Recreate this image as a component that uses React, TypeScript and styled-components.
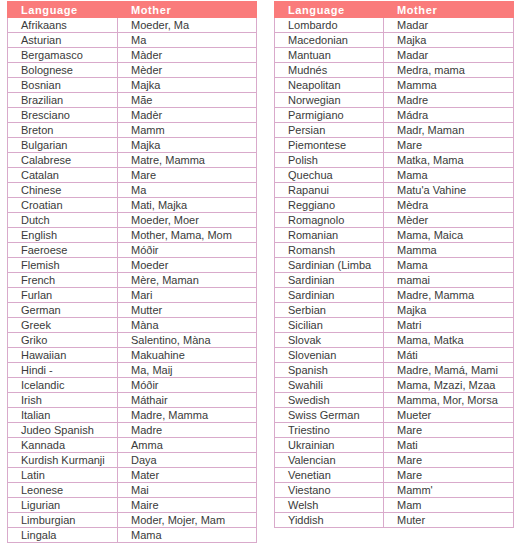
import React from 'react';
import styled, { createGlobalStyle } from 'styled-components';

const GlobalStyle = createGlobalStyle`
  html, body {
    margin: 0;
    padding: 0;
    background: #ffffff;
  }
  body {
    font-family: 'Liberation Sans', Arial, sans-serif;
  }
`;

const Page = styled.div`
  display: flex;
  align-items: flex-start;
  gap: 17px;
  padding: 1px 0 0 7px;
`;

const Table = styled.table<{ $width: number; $first: number }>`
  width: ${(p) => p.$width}px;
  border-collapse: collapse;
  table-layout: fixed;
  font-size: 11px;
  color: #3a3a3a;

  col:first-child {
    width: ${(p) => p.$first}px;
  }
`;

const HeadCell = styled.th`
  height: 15px;
  padding: 0 0 0 13px;
  background: #fa7b7b;
  color: #ffffff;
  font-weight: bold;
  letter-spacing: 0.6px;
  text-align: left;
  line-height: 14px;
  border: 1px solid #fa7b7b;
`;

const Cell = styled.td`
  height: 14px;
  padding: 0 0 0 13px;
  line-height: 14px;
  border: 1px solid #d9aacb;
  white-space: nowrap;
  overflow: hidden;
`;

const left: [string, string][] = [
  ['Afrikaans', 'Moeder, Ma'],
  ['Asturian', 'Ma'],
  ['Bergamasco', 'Màder'],
  ['Bolognese', 'Mèder'],
  ['Bosnian', 'Majka'],
  ['Brazilian', 'Mãe'],
  ['Bresciano', 'Madèr'],
  ['Breton', 'Mamm'],
  ['Bulgarian', 'Majka'],
  ['Calabrese', 'Matre, Mamma'],
  ['Catalan', 'Mare'],
  ['Chinese', 'Ma'],
  ['Croatian', 'Mati, Majka'],
  ['Dutch', 'Moeder, Moer'],
  ['English', 'Mother, Mama, Mom'],
  ['Faeroese', 'Móðir'],
  ['Flemish', 'Moeder'],
  ['French', 'Mère, Maman'],
  ['Furlan', 'Mari'],
  ['German', 'Mutter'],
  ['Greek', 'Màna'],
  ['Griko', 'Salentino, Màna'],
  ['Hawaiian', 'Makuahine'],
  ['Hindi -', 'Ma, Maij'],
  ['Icelandic', 'Móðir'],
  ['Irish', 'Máthair'],
  ['Italian', 'Madre, Mamma'],
  ['Judeo Spanish', 'Madre'],
  ['Kannada', 'Amma'],
  ['Kurdish Kurmanji', 'Daya'],
  ['Latin', 'Mater'],
  ['Leonese', 'Mai'],
  ['Ligurian', 'Maire'],
  ['Limburgian', 'Moder, Mojer, Mam'],
  ['Lingala', 'Mama'],
];

const right: [string, string][] = [
  ['Lombardo', 'Madar'],
  ['Macedonian', 'Majka'],
  ['Mantuan', 'Madar'],
  ['Mudnés', 'Medra, mama'],
  ['Neapolitan', 'Mamma'],
  ['Norwegian', 'Madre'],
  ['Parmigiano', 'Mádra'],
  ['Persian', 'Madr, Maman'],
  ['Piemontese', 'Mare'],
  ['Polish', 'Matka, Mama'],
  ['Quechua', 'Mama'],
  ['Rapanui', "Matu'a Vahine"],
  ['Reggiano', 'Mèdra'],
  ['Romagnolo', 'Mèder'],
  ['Romanian', 'Mama, Maica'],
  ['Romansh', 'Mamma'],
  ['Sardinian (Limba', 'Mama'],
  ['Sardinian', 'mamai'],
  ['Sardinian', 'Madre, Mamma'],
  ['Serbian', 'Majka'],
  ['Sicilian', 'Matri'],
  ['Slovak', 'Mama, Matka'],
  ['Slovenian', 'Máti'],
  ['Spanish', 'Madre, Mamá, Mami'],
  ['Swahili', 'Mama, Mzazi, Mzaa'],
  ['Swedish', 'Mamma, Mor, Morsa'],
  ['Swiss German', 'Mueter'],
  ['Triestino', 'Mare'],
  ['Ukrainian', 'Mati'],
  ['Valencian', 'Mare'],
  ['Venetian', 'Mare'],
  ['Viestano', "Mamm'"],
  ['Welsh', 'Mam'],
  ['Yiddish', 'Muter'],
];

const WordTable = ({
  rows,
  width,
  first,
}: {
  rows: [string, string][];
  width: number;
  first: number;
}) => (
  <Table $width={width} $first={first}>
    <colgroup>
      <col />
      <col />
    </colgroup>
    <thead>
      <tr>
        <HeadCell>Language</HeadCell>
        <HeadCell>Mother</HeadCell>
      </tr>
    </thead>
    <tbody>
      {rows.map(([lang, word], i) => (
        <tr key={i}>
          <Cell>{lang}</Cell>
          <Cell>{word}</Cell>
        </tr>
      ))}
    </tbody>
  </Table>
);

export default function App() {
  return (
    <>
      <GlobalStyle />
      <Page>
        <WordTable rows={left} width={250} first={110} />
        <WordTable rows={right} width={240} first={109} />
      </Page>
    </>
  );
}
